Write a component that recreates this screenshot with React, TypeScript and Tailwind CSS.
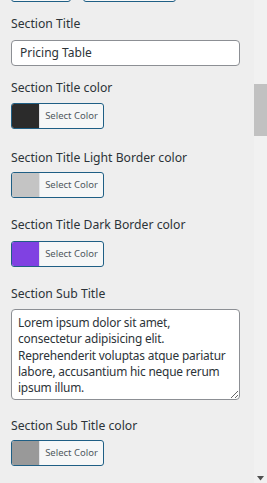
import React from "react";

const font = { fontFamily: '"Noto Sans", "Open Sans", Arial, sans-serif' };

function ColorButton({ color }: { color: string }) {
  return (
    <div className="flex h-[26px] w-[93px] overflow-hidden rounded-[3px] border border-[#1f5f85] bg-[#f6f7f7]">
      <div className="w-[27px] shrink-0" style={{ backgroundColor: color }} />
      <div className="flex flex-1 items-center justify-center border-l border-[#e2e4e7] text-[9.5px] text-[#50575e]">
        Select Color
      </div>
    </div>
  );
}

function Label({ children, className }: { children: React.ReactNode; className: string }) {
  return (
    <div className={"text-[12.2px] leading-[16px] text-[#2c3338] " + className}>{children}</div>
  );
}

export default function App() {
  return (
    <div className="flex h-[483px] w-[267px] overflow-hidden bg-[#eeeeee]" style={font}>
      <div className="w-[254px] shrink-0 pl-[11px]">
        <div className="mt-[-25px] flex gap-[12px]">
          <div className="h-[27px] w-[60px] rounded-[3px] border border-[#1f5f85] bg-[#f6f7f7]" />
          <div className="h-[27px] w-[93px] rounded-[3px] border border-[#1f5f85] bg-[#f6f7f7]" />
        </div>

        <Label className="mt-[14px] mb-[8px]">Section Title</Label>
        <div className="flex h-[26px] w-[229px] items-center rounded-[4px] border border-[#8c8f94] bg-white pl-[8px] text-[12px] text-[#2c3338]">
          Pricing Table
        </div>

        <Label className="mt-[14px] mb-[7px]">Section Title color</Label>
        <ColorButton color="#2b2b2b" />

        <Label className="mt-[21px] mb-[6px]">Section Title Light Border color</Label>
        <ColorButton color="#c4c4c4" />

        <Label className="mt-[19px] mb-[8px]">Section Title Dark Border color</Label>
        <ColorButton color="#8041e2" />

        <Label className="mt-[19px] mb-[7px]">Section Sub Title</Label>
        <textarea
          readOnly
          className="block h-[91px] w-[229px] resize-y overflow-hidden rounded-[4px] border border-[#8c8f94] bg-white px-[6px] pt-[4px] text-[11.9px] leading-[16.3px] tracking-[-0.2px] text-[#2c3338] outline-none"
          style={font}
          defaultValue="Lorem ipsum dolor sit amet, consectetur adipisicing elit. Reprehenderit voluptas atque pariatur labore, accusantium hic neque rerum ipsum illum."
        />

        <Label className="mt-[18px] mb-[6px]">Section Sub Title color</Label>
        <ColorButton color="#999999" />
      </div>
      <div className="relative w-[13px] shrink-0 bg-[#f1f1f1]">
        <div className="mt-[84px] h-[52px] w-full bg-[#c1c1c1]" />
        <svg className="absolute bottom-[2px] left-[3px]" width="7" height="5" viewBox="0 0 7 5">
          <path d="M0 0 H7 L3.5 4.5 Z" fill="#505050" />
        </svg>
      </div>
    </div>
  );
}
